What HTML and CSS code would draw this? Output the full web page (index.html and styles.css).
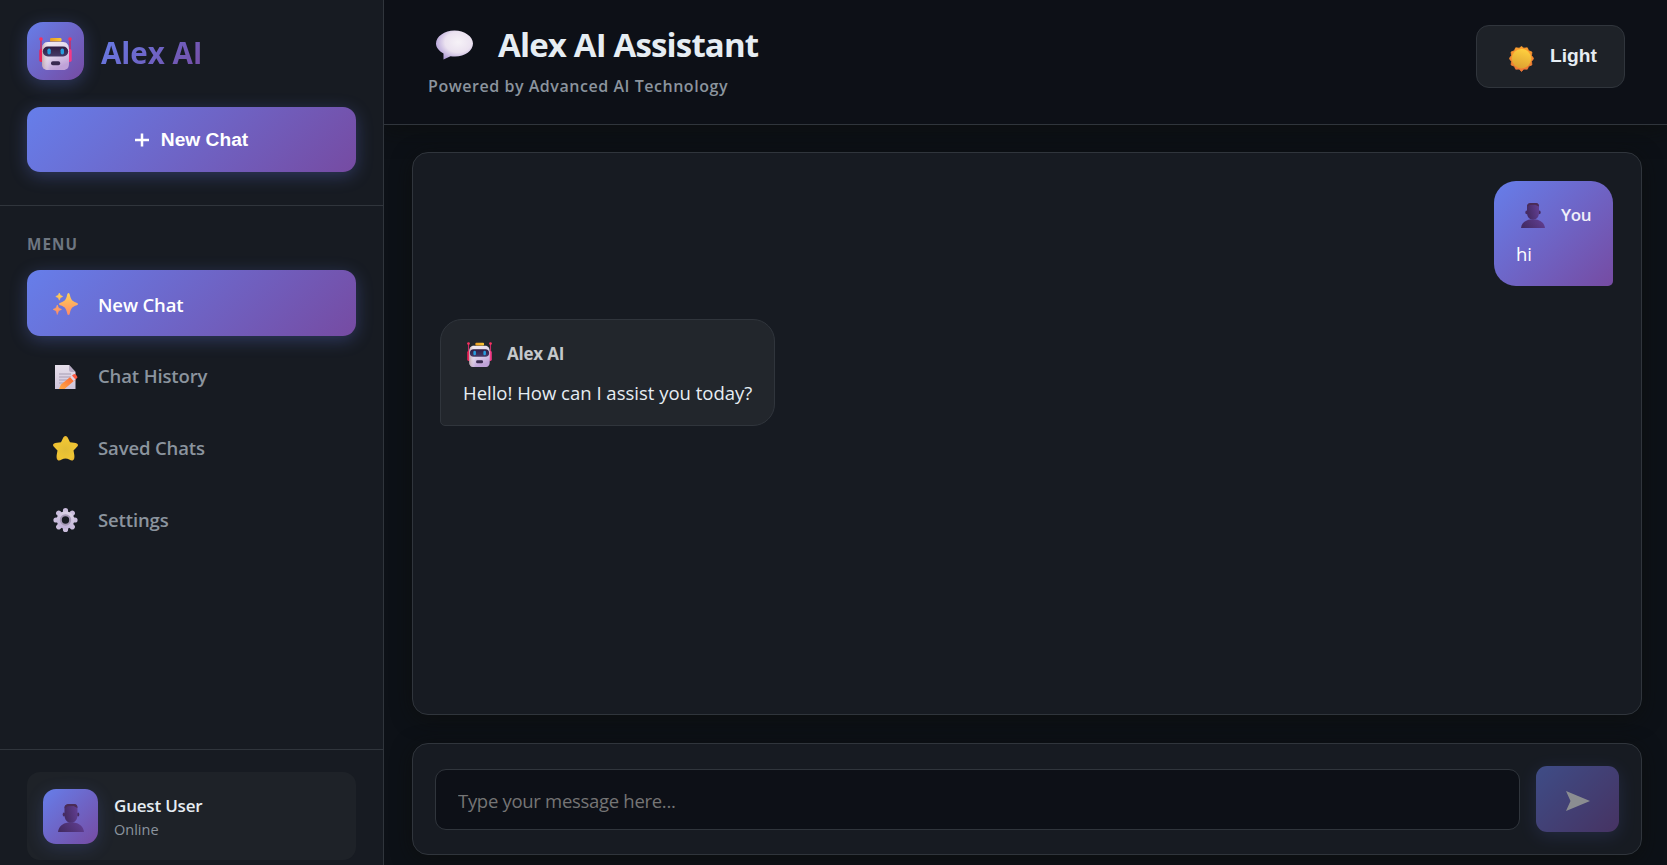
FILE: index.html
```html
<!DOCTYPE html>
<html lang="en">
<head>
<meta charset="utf-8">
<title>Alex AI Assistant</title>
<link rel="stylesheet" href="styles.css">
</head>
<body>
<svg class="defs" width="0" height="0" aria-hidden="true">
  <defs>
    <linearGradient id="face" x1="0" y1="0" x2=".4" y2="1"><stop offset="0" stop-color="#f4eef5"/><stop offset=".6" stop-color="#ddd0e8"/><stop offset="1" stop-color="#bfa2d8"/></linearGradient>
    <linearGradient id="side" x1="0" x2="1"><stop offset="0" stop-color="#b99a9f" stop-opacity=".8"/><stop offset=".3" stop-color="#fff" stop-opacity="0"/></linearGradient>
    <linearGradient id="visor" x1="0" y1="0" x2="0" y2="1"><stop offset="0" stop-color="#2f1c40"/><stop offset="1" stop-color="#453b68"/></linearGradient>
    <linearGradient id="hat" x1="0" y1="0" x2="1" y2="0"><stop offset="0" stop-color="#e79a24"/><stop offset="1" stop-color="#fcc934"/></linearGradient>
    <linearGradient id="spark" x1="0" y1="0" x2="0" y2="1"><stop offset="0" stop-color="#ffd255"/><stop offset="1" stop-color="#ff8a68"/></linearGradient>
    <linearGradient id="paper" x1="0" y1="0" x2="0" y2="1"><stop offset="0" stop-color="#e6dfeb"/><stop offset="1" stop-color="#cfc4da"/></linearGradient>
    <linearGradient id="pencil" x1="0" y1="1" x2="1" y2="0"><stop offset="0" stop-color="#ffab46"/><stop offset="1" stop-color="#fb5f33"/></linearGradient>
    <radialGradient id="star" cx=".5" cy=".55" r=".6"><stop offset="0" stop-color="#e2bd36"/><stop offset=".65" stop-color="#efc534"/><stop offset="1" stop-color="#e9b02d"/></radialGradient>
    <linearGradient id="gear" x1=".7" y1="0" x2=".3" y2="1"><stop offset="0" stop-color="#dcd4e6"/><stop offset="1" stop-color="#bdaed6"/></linearGradient>
    <radialGradient id="balloon" cx=".6" cy=".4" r=".65"><stop offset="0" stop-color="#f6f2f7"/><stop offset=".55" stop-color="#ebe2f0"/><stop offset="1" stop-color="#b09dd6"/></radialGradient>
    <linearGradient id="sun" x1=".7" y1="0" x2=".4" y2="1"><stop offset="0" stop-color="#ffd13f"/><stop offset="1" stop-color="#dda131"/></linearGradient>
    <linearGradient id="rays" x1="0" y1="0" x2="0" y2="1"><stop offset="0" stop-color="#ffa02c"/><stop offset="1" stop-color="#ee7536"/></linearGradient>
    <linearGradient id="person" x1="0" y1=".6" x2="1" y2=".3"><stop offset="0" stop-color="#432a62"/><stop offset="1" stop-color="#613e91"/></linearGradient>
    <symbol id="robot" viewBox="0 0 33 33">
      <path d="M2 2.5V15M31 2.5V15" stroke="#c92c66" stroke-width="1.5"/>
      <circle cx="2" cy="2" r="1.8" fill="#f8305f"/><circle cx="31" cy="2" r="1.8" fill="#f8305f"/>
      <rect x=".3" y="12" width="4" height="13" rx="1.8" fill="#ec2258"/><rect x="28.7" y="12" width="4" height="13" rx="1.8" fill="#f43a86"/>
      <path d="M9 5h15c4 0 6 3 6 8v13c0 5-2 7-6 7H9c-4 0-6-2-6-7V13c0-5 2-8 6-8z" fill="url(#face)"/>
      <path d="M9 5h15c4 0 6 3 6 8v13c0 5-2 7-6 7H9c-4 0-6-2-6-7V13c0-5 2-8 6-8z" fill="url(#side)"/>
      <rect x="11" y="1" width="11.5" height="3.6" rx="1.2" fill="url(#hat)"/>
      <rect x="3.8" y="9.500" width="25.4" height="10" rx="5" fill="url(#visor)"/>
      <rect x="8.4" y="11.5" width="3.4" height="6" rx="1.7" fill="#279ddd"/><rect x="21.6" y="11.5" width="3.4" height="6" rx="1.7" fill="#279ddd"/>
      <rect x="12" y="24.2" width="9.2" height="4" rx="1.8" fill="#392a50"/>
    </symbol>
    <symbol id="bust" viewBox="0 0 26 28">
      <path d="M0 28c.7-5.500 4.500-8.700 10-9.500h6c5.500.8 9.300 4 10 9.500z" fill="url(#person)"/>
      <ellipse cx="5.900" cy="10.500" rx="1.200" ry="2" fill="#472c60"/><ellipse cx="20.100" cy="10.500" rx="1.200" ry="2" fill="#472c60"/>
      <path d="M6.500 4C6.500 1 8.500 0 11 0h5c2.500 0 3.500 1.500 3.500 4v7c0 4.500-2.500 7.800-6.500 7.800S6.500 15.500 6.500 11z" fill="url(#person)"/>
      <path d="M6.500 4C6.500 1 8.500 0 11 0h5c2.500 0 3.500 1.500 3.500 4l-4-2-6 .2-3 2z" fill="#4a2c55"/>
    </symbol>
  </defs>
</svg>
<div class="app">
  <aside class="sidebar">
    <div class="sidebar-top">
      <div class="logo">
        <div class="logo-icon"><svg width="33" height="33"><use href="#robot"/></svg></div>
        <div class="logo-text">Alex AI</div>
      </div>
      <button class="new-chat"><svg width="14" height="14" viewBox="0 0 14 14"><path d="M7 .5v13M0 7h14" stroke="#fff" stroke-width="2.500"/></svg><span>New Chat</span></button>
    </div>
    <nav class="menu">
      <div class="menu-title">MENU</div>
      <a class="item active"><svg width="25" height="26" viewBox="0 0 25 26"><path d="M15.500 1c.8 0 1.200 1 1.500 2.500 1 4 2 5.500 6 7 1.500.6 2 1 2 1.500s-.5 1-2 1.500c-4 1.500-5 3-6 7-.3 1.700-.7 2.500-1.500 2.500s-1.200-.8-1.500-2.500c-1-4-2-5.500-6-7C6.500 13 6 12.600 6 12s.5-.9 2-1.500c4-1.500 5-3 6-7 .3-1.500.7-2.500 1.500-2.500z" fill="url(#spark)"/><path d="M6.300 1l1 2.300 2.400 1.200-2.400 1.200-1 2.500-1-2.500-2.500-1.200 2.500-1.200zM4.300 13l1.200 3 3 1.400-3 1.400-1.200 3.700-1.200-3.700-3-1.400 3-1.400z" fill="url(#spark)" stroke="url(#spark)" stroke-width=".6"/></svg><span>New Chat</span></a>
      <a class="item"><svg width="25" height="26" viewBox="0 0 25 26"><path d="M2 1h14l6.500 7v17H2z" fill="url(#paper)"/><path d="M16 1v4.500Q16 8 18.500 8h4z" fill="#b7acc4"/><path d="M6 10h12M6 13h12M6 16h9M6 19h6" stroke="#a69db3" stroke-width="1"/><path d="M6 25l2-4.500L18.500 12l3.500 4-10.500 9z" fill="url(#pencil)"/><path d="M17 13l2-1.500 3.500 4-2 1.600z" fill="#e2d5e6"/><path d="M19 11.500l2-1.400c1-.5 3.500 2 3.500 3.400l-2 2z" fill="#fb5b42"/></svg><span>Chat History</span></a>
      <a class="item"><svg width="25" height="26" viewBox="0 0 25 26"><path d="M12.500 1c1.300 0 2 1 2.800 2.700l1.700 3.500 4 .5c2.500.3 4 1 4 2.300 0 1-1 2-2.300 3.200l-2.200 2.300.8 4.500c.4 3-.2 5.500-2.300 5.500-1.500 0-3.800-2-6.500-2s-5 2-6.500 2C4 25.500 3.300 23 3.700 20l.8-4.500-2.200-2.300C1 12 0 11 0 10c0-1.300 1.500-2 4-2.300l4-.5 1.700-3.500C10.500 2 11.200 1 12.500 1z" fill="url(#star)"/></svg><span>Saved Chats</span></a>
      <a class="item"><svg width="25" height="26" viewBox="0 0 25 26"><g fill="url(#gear)"><g stroke="#cabddc" stroke-width="5.200" stroke-linecap="round"><path d="M12.500 3.500v19M3 13h19M5.700 6.200l13.600 13.600M19.300 6.200L5.700 19.800"/></g><circle cx="12.500" cy="13" r="8.800"/></g><circle cx="12.500" cy="13" r="4.700" fill="#171b22" stroke="#a598b6" stroke-width="2"/></svg><span>Settings</span></a>
    </nav>
    <div class="sidebar-foot">
      <div class="user">
        <div class="avatar"><svg width="26" height="28"><use href="#bust"/></svg></div>
        <div class="who"><div class="name">Guest User</div><div class="status">Online</div></div>
      </div>
    </div>
  </aside>
  <main class="main">
    <header class="header">
      <div class="heading">
        <h1><svg width="37" height="30" viewBox="0 0 37 30"><path d="M18.500.5C28.500.5 37 6.500 37 13.500S29 26.500 19 26.500c-1.500 0-3 0-4.500-.3L7.500 29.500v-6C3 21 0 17.500 0 13.500 0 6.500 8.500.5 18.500.5z" fill="url(#balloon)"/></svg><span>Alex AI Assistant</span></h1>
        <p>Powered by Advanced AI Technology</p>
      </div>
      <button class="theme"><svg width="25" height="26" viewBox="0 0 25 26"><path d="M12.500.5l2.300 1.700 3.500-.4 1.300 2.900 3.300 1.300-.4 3.500 2.200 3-2.200 2.900.4 3.500-3.300 1.400-1.300 2.900-3.500-.1-2.300 2.400-2.300-2.400-3.500.1-1.300-2.900-3.300-1.400.4-3.500L.3 12.500l2.200-3L2.100 6l3.300-1.300 1.300-2.900 3.500.4z" fill="url(#rays)" stroke="url(#rays)" stroke-linejoin="round" stroke-width=".8"/><circle cx="12.500" cy="12.700" r="9.700" fill="url(#sun)"/></svg><span>Light</span></button>
    </header>
    <section class="content">
      <div class="chat">
        <div class="bubble mine">
          <div class="from"><svg width="24" height="25" viewBox="0 0 26 28" preserveAspectRatio="none"><use href="#bust" width="26" height="28"/></svg><span>You</span></div>
          <div class="msg">hi</div>
        </div>
        <div class="bubble bot">
          <div class="from"><svg width="25" height="25"><use href="#robot"/></svg><span>Alex AI</span></div>
          <div class="msg">Hello! How can I assist you today?</div>
        </div>
      </div>
      <div class="composer">
        <input type="text" placeholder="Type your message here...">
        <button class="send" aria-label="Send"><svg width="24" height="20" viewBox="0 0 24 20"><path d="M0 0l24 10L0 20l4.500-10z" fill="#fff"/></svg></button>
      </div>
    </section>
  </main>
</div>
</body>
</html>
```

FILE: styles.css
```css
* { box-sizing: border-box; }
body {
  margin: 0;
  background: #0d1117;
  color: #e6edf3;
  font-family: "Open Sans", "Noto Sans", sans-serif;
  overflow: hidden;
}
svg { display: block; flex: none; }
.defs { position: absolute; }
button { border: 0; padding: 0; font-family: "Liberation Sans", Arial, sans-serif; font-weight: 700; }
span, .logo-text, .name, .status, .msg, .menu-title, p { white-space: nowrap; }
.app { display: flex; height: 865px; }

.sidebar {
  position: relative;
  z-index: 1;
  display: flex;
  flex-direction: column;
  width: 384px;
  flex: none;
  background: #171b22;
  border-right: 1px solid #30353c;
}
.sidebar-top { height: 206px; padding: 22px 27px 0; border-bottom: 1px solid #30353c; }
.logo { display: flex; align-items: center; gap: 17px; height: 58px; }
.logo-icon {
  display: flex;
  justify-content: center;
  width: 57px;
  height: 58px;
  padding-top: 15px;
  border-radius: 16px;
  background: linear-gradient(135deg, #667eea, #764ba2);
  box-shadow: 0 4px 17px rgba(102, 126, 234, .3);
}
.logo-text {
  margin-top: 3px;
  font-size: 29.5px;
  line-height: 40px;
  font-weight: 700;
  background: linear-gradient(135deg, #667eea, #764ba2);
  -webkit-background-clip: text;
  background-clip: text;
  color: transparent;
}
.new-chat {
  display: flex;
  align-items: center;
  justify-content: center;
  gap: 12px;
  width: 329px;
  height: 65px;
  margin-top: 27px;
  border-radius: 13px;
  background: linear-gradient(135deg, #667eea, #764ba2);
  box-shadow: 0 4px 17px rgba(102, 126, 234, .3);
  color: #fff;
  font-size: 19.2px;
}
.menu { flex: 1; padding: 26px 27px 0; }
.menu-title {
  height: 38px;
  line-height: 24px;
  font-size: 15.2px;
  font-weight: 700;
  letter-spacing: 1.100px;
  color: #6e7681;
}
.item {
  display: flex;
  align-items: center;
  gap: 20.500px;
  height: 66px;
  margin-bottom: 5.700px;
  padding: 2px 25.500px 0;
  border-radius: 13px;
  color: #8b949e;
  font-size: 18.5px;
  font-weight: 600;
  letter-spacing: -.13px;
}
.item svg { margin-top: 2px; }
.item.active {
  background: linear-gradient(135deg, #667eea, #764ba2);
  box-shadow: 0 4px 17px rgba(102, 126, 234, .3);
  color: #fff;
}
.sidebar-foot { height: 116px; padding: 22px 27px 0; border-top: 1px solid #30353c; }
.user {
  display: flex;
  align-items: center;
  gap: 16px;
  height: 88px;
  padding: 0 16px;
  border-radius: 13px;
  background: #1e2228;
}
.avatar {
  display: flex;
  justify-content: center;
  width: 55px;
  height: 55px;
  padding-top: 15px;
  border-radius: 13px;
  background: linear-gradient(135deg, #667eea, #764ba2);
  box-shadow: 0 4px 17px rgba(102, 126, 234, .2);
}
.who { padding-top: 2px; }
.name { font-size: 17px; line-height: 25px; font-weight: 600; letter-spacing: -.2px; color: #e6edf3; }
.status { font-size: 14.5px; line-height: 23px; color: #8b949e; }

.main { flex: 1; display: flex; flex-direction: column; min-width: 0; }
.header {
  display: flex;
  justify-content: space-between;
  height: 125px;
  padding: 22px 42px 0 44px;
  border-bottom: 1px solid #30353c;
  background: #0d1017;
  box-shadow: 0 4px 20px rgba(13, 14, 13, .7);
}
h1 {
  display: flex;
  align-items: center;
  gap: 25px;
  height: 46px;
  margin: 0;
  padding-left: 8px;
  font-size: 33px;
  line-height: 46px;
  font-weight: 700;
  letter-spacing: -.84px;
}
p { margin: 6px 0 0; font-size: 16px; line-height: 24px; font-weight: 600; letter-spacing: .54px; color: #8b949e; }
.theme {
  display: flex;
  gap: 16px;
  width: 149px;
  height: 63px;
  margin-top: 3px;
  padding: 20px 0 0 32px;
  border: 1px solid #30353c;
  border-radius: 13px;
  background: #1e2228;
  color: #e6edf3;
  font-size: 19.2px;
}
.theme span { line-height: 20px; }
.content { flex: 1; display: flex; flex-direction: column; gap: 28px; padding: 27px 25px 10px 28px; }
.chat {
  display: flex;
  flex-direction: column;
  gap: 33px;
  height: 563px;
  padding: 28px 28px 28px 27px;
  border: 1px solid #30353c;
  border-radius: 16px;
  background: #171b22;
  box-shadow: 0 4px 20px rgba(13, 14, 13, .7);
}
.bubble { border-radius: 22px; }
.from { display: flex; align-items: center; height: 26px; font-size: 17px; font-weight: 600; }
.from span { padding-bottom: 2px; }
.msg { font-size: 18.500px; line-height: 30px; }
.mine {
  align-self: flex-end;
  width: 119px;
  height: 105px;
  padding: 21px 22px;
  border-bottom-right-radius: 5px;
  background: linear-gradient(135deg, #667eea, #764ba2);
  color: #fff;
}
.mine .from { gap: 16px; padding-left: 5px; color: #f1eef9; letter-spacing: -.4px; }
.mine .msg { margin-top: 11px; }
.bot {
  align-self: flex-start;
  width: 335px;
  height: 107px;
  padding: 21px 22px;
  border: 1px solid #30353c;
  border-bottom-left-radius: 5px;
  background: #22262c;
}
.bot .from { gap: 15px; padding-left: 4px; color: #c5c8cb; font-weight: 700; letter-spacing: -.2px; }
.bot .msg { margin-top: 11px; }
.composer {
  display: flex;
  align-items: center;
  justify-content: space-between;
  height: 112px;
  padding: 0 22px;
  border: 1px solid #30353c;
  border-radius: 16px;
  background: #171b22;
  box-shadow: 0 4px 20px rgba(13, 14, 13, .7);
}
input {
  width: 1085px;
  height: 61px;
  padding: 3px 22px 0;
  border: 1px solid #30353c;
  border-radius: 11px;
  background: #0d1017;
  font-family: "Open Sans", "Noto Sans", sans-serif;
  font-size: 18.500px;
  letter-spacing: -.3px;
}
input::placeholder { color: #757575; }
.send {
  display: flex;
  align-items: center;
  justify-content: center;
  width: 83px;
  height: 66px;
  padding-top: 3px;
  border-radius: 11px;
  background: linear-gradient(135deg, #667eea, #764ba2);
  box-shadow: 0 4px 17px rgba(102, 126, 234, .3);
  opacity: .5;
}
```
